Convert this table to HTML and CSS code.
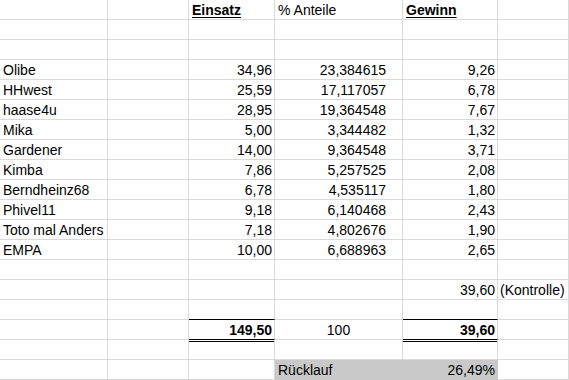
FILE: index.html
```html
<!DOCTYPE html>
<html lang="de">
<head>
<meta charset="utf-8">
<title>Tabelle</title>
<link rel="stylesheet" href="styles.css">
</head>
<body>
<div class="sheet">
  <div class="c"></div><div class="c"></div><div class="c l"><span class="hd">Einsatz</span></div><div class="c l">% Anteile</div><div class="c l"><span class="hd">Gewinn</span></div><div class="c"></div>
  <div class="c"></div><div class="c"></div><div class="c"></div><div class="c"></div><div class="c"></div><div class="c"></div>
  <div class="c"></div><div class="c"></div><div class="c"></div><div class="c"></div><div class="c"></div><div class="c"></div>

  <div class="c l">Olibe</div><div class="c"></div><div class="c r">34,96</div><div class="c r pct">23,384615</div><div class="c r">9,26</div><div class="c"></div>
  <div class="c l">HHwest</div><div class="c"></div><div class="c r">25,59</div><div class="c r pct">17,117057</div><div class="c r">6,78</div><div class="c"></div>
  <div class="c l">haase4u</div><div class="c"></div><div class="c r">28,95</div><div class="c r pct">19,364548</div><div class="c r">7,67</div><div class="c"></div>
  <div class="c l">Mika</div><div class="c"></div><div class="c r">5,00</div><div class="c r pct">3,344482</div><div class="c r">1,32</div><div class="c"></div>
  <div class="c l">Gardener</div><div class="c"></div><div class="c r">14,00</div><div class="c r pct">9,364548</div><div class="c r">3,71</div><div class="c"></div>
  <div class="c l">Kimba</div><div class="c"></div><div class="c r">7,86</div><div class="c r pct">5,257525</div><div class="c r">2,08</div><div class="c"></div>
  <div class="c l">Berndheinz68</div><div class="c"></div><div class="c r">6,78</div><div class="c r pct">4,535117</div><div class="c r">1,80</div><div class="c"></div>
  <div class="c l">Phivel11</div><div class="c"></div><div class="c r">9,18</div><div class="c r pct">6,140468</div><div class="c r">2,43</div><div class="c"></div>
  <div class="c l">Toto mal Anders</div><div class="c"></div><div class="c r">7,18</div><div class="c r pct">4,802676</div><div class="c r">1,90</div><div class="c"></div>
  <div class="c l">EMPA</div><div class="c"></div><div class="c r">10,00</div><div class="c r pct">6,688963</div><div class="c r">2,65</div><div class="c"></div>

  <div class="c"></div><div class="c"></div><div class="c"></div><div class="c"></div><div class="c"></div><div class="c"></div>
  <div class="c"></div><div class="c"></div><div class="c"></div><div class="c"></div><div class="c r">39,60</div><div class="c l note">(Kontrolle)</div>
  <div class="c"></div><div class="c"></div><div class="c line"></div><div class="c"></div><div class="c line"></div><div class="c"></div>
  <div class="c"></div><div class="c"></div><div class="c r b dbl">149,50</div><div class="c m">100</div><div class="c r b dbl">39,60</div><div class="c"></div>
  <div class="c"></div><div class="c"></div><div class="c"></div><div class="c"></div><div class="c"></div><div class="c"></div>
  <div class="c"></div><div class="c"></div><div class="c"></div><div class="c l fill">Rücklauf</div><div class="c r fill">26,49%</div><div class="c"></div>
</div>
</body>
</html>
```

FILE: styles.css
```css
html, body {
  margin: 0;
  padding: 0;
  background: #ffffff;
  overflow: hidden;
}

.sheet {
  display: grid;
  grid-template-columns: 108px 81px 86px 128px 95px 1fr;
  grid-auto-rows: 20px;
  width: 569px;
  font-family: "Liberation Sans", Arial, sans-serif;
  font-size: 14px;
  color: #000;
}

.c {
  box-sizing: border-box;
  border-right: 1px solid #d9d9d9;
  border-bottom: 1px solid #d9d9d9;
  line-height: 17px;
  padding: 2px 2px 0 2px;
  white-space: nowrap;
  overflow: visible;
}

.l { text-align: left; padding-left: 3px; }
.r { text-align: right; padding-right: 2px; }
.m { text-align: center; }
.pct { padding-right: 16px; }
.b { font-weight: bold; }
.note { padding-left: 2px; }

.hd {
  font-weight: bold;
  text-decoration: underline;
  text-underline-offset: 2px;
}

.line { border-bottom-color: #000; }

.dbl {
  border-bottom-color: #000;
  box-shadow: 0 1px 0 #fff, 0 2px 0 #000;
}

.fill {
  background: #c9c9c9;
  border-right-color: #c9c9c9;
  border-bottom-color: #c9c9c9;
}
```
